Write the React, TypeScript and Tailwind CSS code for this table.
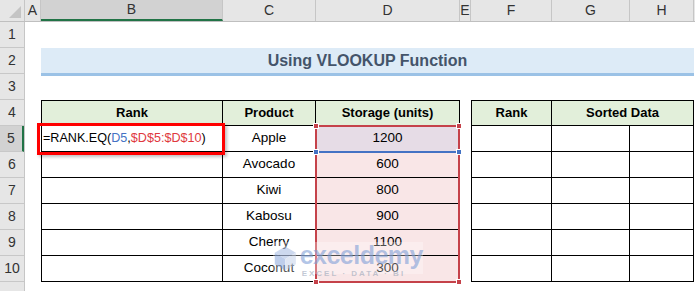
import React from 'react';

const COLS = [
  { id: 'A', w: 'w-[16px]' },
  { id: 'B', w: 'w-[182px]' },
  { id: 'C', w: 'w-[93px]' },
  { id: 'D', w: 'w-[144px]' },
  { id: 'E', w: 'w-[11px]' },
  { id: 'F', w: 'w-[81px]' },
  { id: 'G', w: 'w-[78px]' },
  { id: 'H', w: 'w-[64px]' },
];

const products = [
  { name: 'Apple', units: 1200 },
  { name: 'Avocado', units: 600 },
  { name: 'Kiwi', units: 800 },
  { name: 'Kabosu', units: 900 },
  { name: 'Cherry', units: 1100 },
  { name: 'Coconut', units: 300 },
];

const rowStarts = ['row-start-5', 'row-start-6', 'row-start-7', 'row-start-8', 'row-start-9', 'row-start-10'];

function Handle({ className }: { className: string }) {
  return <div className={`absolute w-[6px] h-[6px] border border-white ${className}`} />;
}

export default function App() {
  return (
    <div className="w-[695px] h-[291px] bg-white overflow-hidden font-['Liberation_Sans',Arial,sans-serif] text-black">
      {/* Column headers */}
      <div className="flex h-[22px] bg-[#e6e6e6] border-b border-[#bfbfbf]">
        <div className="relative w-[25px] border-r border-[#c6c6c6]">
          <div className="absolute right-[3px] bottom-[3px] w-0 h-0 border-l-[12px] border-l-transparent border-b-[12px] border-b-[#c4c4c4]" />
        </div>
        {COLS.map((c) => (
          <div
            key={c.id}
            className={`${c.w} flex items-center justify-center text-[14px] text-[#333] border-r border-[#c6c6c6] ${
              c.id === 'B' ? 'bg-[#d2d2d2] border-b-2 border-b-[#217346] text-[#222]' : ''
            }`}
          >
            {c.id}
          </div>
        ))}
      </div>

      <div className="flex">
        {/* Row headers */}
        <div className="w-[25px] flex flex-col bg-[#e6e6e6] border-r border-[#c6c6c6] h-[269px]">
          {[1, 2, 3, 4, 5, 6, 7, 8, 9, 10, 11].map((n) => (
            <div
              key={n}
              className={`h-[26px] shrink-0 flex items-center justify-center text-[14px] text-[#333] border-b border-[#c8c8c8] ${
                n === 5 ? 'bg-[#d2d2d2] border-r-2 border-r-[#217346]' : ''
              }`}
            >
              {n <= 10 ? n : ''}
            </div>
          ))}
        </div>

        {/* Sheet */}
        <div className="relative grid grid-cols-[16px_182px_93px_144px_11px_81px_78px_64px] grid-rows-[repeat(10,26px)] text-[13.5px]">
          {/* Title */}
          <div className="col-start-2 col-span-7 row-start-2 self-start h-[28px] bg-[#ddebf7] border-b-[3px] border-[#9bc2e6] flex items-center justify-center text-[16px] font-bold text-[#44546a]">
            Using VLOOKUP Function
          </div>

          {/* Table 1 header */}
          <div className="col-start-2 row-start-4 bg-[#e2efda] border border-black flex items-center justify-center font-bold text-[13px]">Rank</div>
          <div className="col-start-3 row-start-4 bg-[#e2efda] border-y border-r border-black flex items-center justify-center font-bold text-[13px]">Product</div>
          <div className="col-start-4 row-start-4 bg-[#e2efda] border-y border-r border-black flex items-center justify-center font-bold text-[13px]">Storage (units)</div>

          {products.map((p, i) => (
            <React.Fragment key={p.name}>
              <div className={`col-start-2 ${rowStarts[i]} border-x border-b border-black flex items-center pl-[1px]`}>
                {i === 0 && (
                  <span className="text-[12.6px] whitespace-nowrap">
                    =RANK.EQ(<span className="text-[#4472c4]">D5</span>,<span className="text-[#e0393e]">$D$5:$D$10</span>)
                  </span>
                )}
              </div>
              <div className={`col-start-3 ${rowStarts[i]} border-r border-b border-black flex items-center justify-center`}>{p.name}</div>
              <div
                className={`col-start-4 ${rowStarts[i]} border-r border-b border-black flex items-center justify-center ${
                  i === 0 ? 'bg-[#e6dce6]' : 'bg-[#f9e6e7]'
                }`}
              >
                {p.units}
              </div>
            </React.Fragment>
          ))}

          {/* Table 2 */}
          <div className="col-start-6 row-start-4 bg-[#e2efda] border border-black flex items-center justify-center font-bold text-[13px]">Rank</div>
          <div className="col-start-7 col-span-2 row-start-4 bg-[#e2efda] border-y border-r border-black flex items-center justify-center font-bold text-[13px]">Sorted Data</div>
          {rowStarts.map((r) => (
            <React.Fragment key={r}>
              <div className={`col-start-6 ${r} border-x border-b border-black`} />
              <div className={`col-start-7 ${r} border-r border-b border-black`} />
              <div className={`col-start-8 ${r} border-r border-b border-black`} />
            </React.Fragment>
          ))}

          {/* Formula cell highlight */}
          <div className="absolute left-[12px] top-[101px] w-[188px] h-[32px] border-[3px] border-[#ff0000] shadow-[2px_2px_3px_rgba(0,0,0,0.25)]" />

          {/* Referenced ranges */}
          <div className="absolute left-[290px] top-[103px] w-[145px] h-[158px] border-2 border-[#c5424a]" />
          <div className="absolute left-[292px] top-[129px] w-[141px] h-[2px] bg-[#4472c4]" />
          <Handle className="left-[288px] top-[101px] bg-[#c5424a]" />
          <Handle className="left-[431px] top-[101px] bg-[#c5424a]" />
          <Handle className="left-[288px] top-[257px] bg-[#c5424a]" />
          <Handle className="left-[431px] top-[257px] bg-[#c5424a]" />
          <Handle className="left-[288px] top-[127px] bg-[#4472c4]" />
          <Handle className="left-[431px] top-[127px] bg-[#4472c4]" />

          {/* Watermark */}
          <div className="absolute left-[248px] top-[220px] w-[150px] h-[32px] bg-white/30 flex items-start pointer-events-none">
            <svg width="28" height="30" viewBox="0 0 28 30" className="opacity-50 mt-[1px]">
              <polygon points="14,2 26,9 14,16 2,9" fill="#9db4e0" />
              <polygon points="2,9 14,16 14,29 2,22" fill="#7f9fd8" />
              <polygon points="26,9 14,16 14,29 26,22" fill="#c1cfe9" />
            </svg>
            <div className="flex flex-col ml-[2px] leading-none">
              <span className="text-[25px] font-bold text-[#7f9fd8]/60 tracking-[-0.5px] mt-[1px]">exceldemy</span>
              <span className="text-[8px] font-bold text-[#9aa6b8]/60 tracking-[2px] mt-[2px] ml-[2px]">EXCEL · DATA · BI</span>
            </div>
          </div>
        </div>
      </div>
    </div>
  );
}
